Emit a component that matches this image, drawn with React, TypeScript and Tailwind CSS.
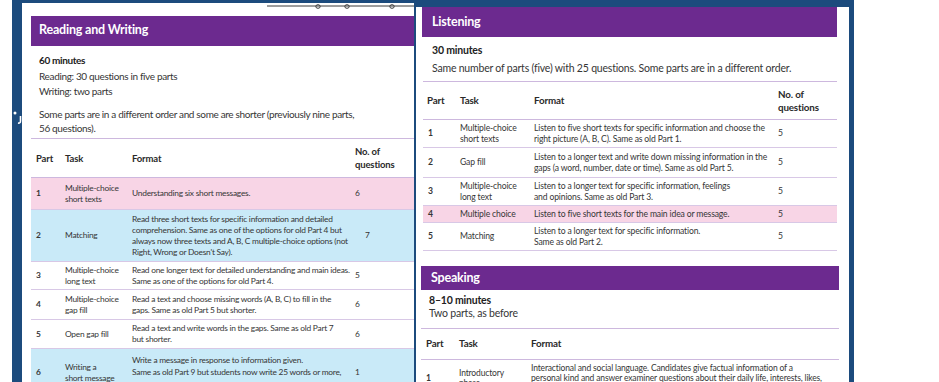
type Row = {
  part: string;
  task: string[];
  format: string[];
  n?: string;
  nPad?: string;
  h: string;
  bg?: string;
};

const leftRows: Row[] = [
  {
    part: "1",
    task: ["Multiple-choice", "short texts"],
    format: ["Understanding six short messages."],
    n: "6",
    h: "h-[32px]",
    bg: "bg-[#f8d5e6]",
  },
  {
    part: "2",
    task: ["Matching"],
    format: [
      "Read three short texts for specific information and detailed",
      "comprehension. Same as one of the options for old Part 4 but",
      "always now three texts and A, B, C multiple-choice options (not",
      "Right, Wrong or Doesn't Say).",
    ],
    n: "7",
    nPad: "pl-[10px]",
    h: "h-[52px]",
    bg: "bg-[#c9eaf8]",
  },
  {
    part: "3",
    task: ["Multiple-choice", "long text"],
    format: [
      "Read one longer text for detailed understanding and main ideas.",
      "Same as one of the options for old Part 4.",
    ],
    n: "5",
    h: "h-[28px]",
  },
  {
    part: "4",
    task: ["Multiple-choice", "gap fill"],
    format: [
      "Read a text and choose missing words (A, B, C) to fill in the",
      "gaps. Same as old Part 5 but shorter.",
    ],
    n: "6",
    h: "h-[30px]",
  },
  {
    part: "5",
    task: ["Open gap fill"],
    format: [
      "Read a text and write words in the gaps. Same as old Part 7",
      "but shorter.",
    ],
    n: "6",
    h: "h-[29px]",
  },
  {
    part: "6",
    task: ["Writing a", "short message"],
    format: [
      "Write a message in response to information given.",
      "Same as old Part 9 but students now write 25 words or more,",
      "rather than writing 25–35 words.",
    ],
    n: "1",
    h: "h-[48px]",
    bg: "bg-[#c9eaf8]",
  },
];

const listeningRows: Row[] = [
  {
    part: "1",
    task: ["Multiple-choice", "short texts"],
    format: [
      "Listen to five short texts for specific information and choose the",
      "right picture (A, B, C). Same as old Part 1.",
    ],
    n: "5",
    h: "h-[28px]",
  },
  {
    part: "2",
    task: ["Gap fill"],
    format: [
      "Listen to a longer text and write down missing information in the",
      "gaps (a word, number, date or time). Same as old Part 5.",
    ],
    n: "5",
    h: "h-[30px]",
  },
  {
    part: "3",
    task: ["Multiple-choice", "long text"],
    format: [
      "Listen to a longer text for specific information, feelings",
      "and opinions. Same as old Part 3.",
    ],
    n: "5",
    h: "h-[28px]",
  },
  {
    part: "4",
    task: ["Multiple choice"],
    format: ["Listen to five short texts for the main idea or message."],
    n: "5",
    h: "h-[17px]",
    bg: "bg-[#f8d5e6]",
  },
  {
    part: "5",
    task: ["Matching"],
    format: ["Listen to a longer text for specific information.", "Same as old Part 2."],
    n: "5",
    h: "h-[28px]",
  },
];

function Lines({ lines }: { lines: string[] }) {
  return (
    <div className="whitespace-nowrap">
      {lines.map((l) => (
        <div key={l}>{l}</div>
      ))}
    </div>
  );
}

function SectionHeader({ title, className }: { title: string; className: string }) {
  return (
    <div className={`flex items-center bg-[#6c2a8f] ${className}`}>
      <span className="text-[12.5px] font-bold tracking-[-0.2px] text-white">{title}</span>
    </div>
  );
}

export default function App() {
  return (
    <div className="relative flex h-[382px] w-[939px] overflow-hidden bg-white font-[Lato,sans-serif] text-[#363636]">
      <div className="w-[12px]" />

      {/* blue backdrop holding both pages */}
      <div className="flex w-[842px] bg-[#1c4b7d] pl-[10px]">
        {/* Left page */}
        <div className="relative mt-[3px] w-[392px] bg-white">
          <svg className="absolute left-[245px] top-0" width="147" height="8" viewBox="0 0 147 8">
            <line x1="0" y1="3" x2="147" y2="3" stroke="#3a3a3a" strokeWidth="1" />
            <ellipse cx="51" cy="3.5" rx="2.2" ry="1.8" fill="none" stroke="#3a3a3a" strokeWidth="1" />
            <ellipse cx="80" cy="3.5" rx="2.2" ry="1.8" fill="none" stroke="#3a3a3a" strokeWidth="1" />
            <ellipse cx="125" cy="3.5" rx="2.2" ry="1.8" fill="none" stroke="#3a3a3a" strokeWidth="1" />
          </svg>

          <SectionHeader title="Reading and Writing" className="ml-[9px] mt-[12.5px] h-[30px] pl-[8px]" />

          <div className="mt-[7.5px] pl-[17px] text-[10px] leading-[15.5px] tracking-[-0.35px]">
            <p className="font-bold text-[#222]">60 minutes</p>
            <p>Reading: 30 questions in five parts</p>
            <p>Writing: two parts</p>
            <p className="mt-[7px] leading-[14.5px]">
              Some parts are in a different order and some are shorter (previously nine parts,
              <br />
              56 questions).
            </p>
          </div>

          <div className="ml-[9px] mt-[2.5px] border-t border-[#cdb8de] text-[8.4px] tracking-[-0.25px]">
            <div className="grid h-[39px] grid-cols-[34px_67px_223px_1fr] items-center border-b border-[#cdb8de] text-[9.5px] font-bold leading-[13px] tracking-[-0.15px] text-[#2a2a2a]">
              <div className="pl-[5px]">Part</div>
              <div>Task</div>
              <div>Format</div>
              <div>
                No. of
                <br />
                questions
              </div>
            </div>
            {leftRows.map((r) => (
              <div
                key={r.part}
                className={`grid grid-cols-[34px_67px_223px_1fr] items-center border-b border-[#d8c8e6] leading-[11px] ${r.h} ${r.bg ?? ""}`}
              >
                <div className="pl-[5px] font-bold">{r.part}</div>
                <Lines lines={r.task} />
                <div className={r.part === "6" ? "leading-[12.5px]" : ""}>
                  <Lines lines={r.format} />
                </div>
                <div className={r.nPad ?? ""}>{r.n}</div>
              </div>
            ))}
          </div>
        </div>

        <div className="w-[2px]" />

        {/* Right page */}
        <div className="mt-[7px] w-[433px] bg-white">
          <SectionHeader title="Listening" className="ml-[6px] h-[30px] w-[415px] pl-[10px]" />

          <div className="mt-[5.5px] pl-[16px] text-[10.5px] leading-[15px] tracking-[-0.2px]">
            <p className="font-bold text-[#222]">30 minutes</p>
            <p className="mt-[3px]">
              Same number of parts (five) with 25 questions. Some parts are in a different order.
            </p>
          </div>

          <div className="ml-[7px] mt-[5.5px] w-[414px] border-t border-[#cdb8de] text-[8.6px] tracking-[-0.15px]">
            <div className="grid h-[38px] grid-cols-[37px_74px_244px_1fr] items-center border-b border-[#cdb8de] text-[9.8px] font-bold leading-[13px] text-[#2a2a2a]">
              <div className="pl-[4px]">Part</div>
              <div>Task</div>
              <div>Format</div>
              <div>
                No. of
                <br />
                questions
              </div>
            </div>
            {listeningRows.map((r) => (
              <div
                key={r.part}
                className={`grid grid-cols-[37px_74px_244px_1fr] items-center border-b border-[#d8c8e6] leading-[11px] ${r.h} ${r.bg ?? ""}`}
              >
                <div className="pl-[5px] font-bold">{r.part}</div>
                <Lines lines={r.task} />
                <Lines lines={r.format} />
                <div>{r.n}</div>
              </div>
            ))}
          </div>

          <SectionHeader title="Speaking" className="ml-[5px] mt-[15px] h-[24px] w-[418px] pl-[10px]" />

          <div className="mt-[3.5px] pl-[13px] text-[10.5px] leading-[13px] tracking-[-0.2px]">
            <p className="font-bold text-[#222]">8–10 minutes</p>
            <p>Two parts, as before</p>
          </div>

          <div className="ml-[5px] mt-[8px] w-[418px] border-t border-[#cdb8de] text-[8.5px] tracking-[-0.15px]">
            <div className="grid h-[31px] grid-cols-[38px_72px_1fr] items-center border-b border-[#cdb8de] text-[9.8px] font-bold text-[#2a2a2a]">
              <div className="pl-[5px]">Part</div>
              <div>Task</div>
              <div>Format</div>
            </div>
            <div className="grid h-[37px] grid-cols-[38px_72px_1fr] items-center leading-[10px]">
              <div className="pl-[5px] font-bold">1</div>
              <Lines lines={["Introductory", "phase"]} />
              <Lines
                lines={[
                  "Interactional and social language. Candidates give factual information of a",
                  "personal kind and answer examiner questions about their daily life, interests, likes,",
                  "etc., followed by a longer 'Tell me something about …' question.",
                ]}
              />
            </div>
          </div>
        </div>
      </div>

      {/* stray white marks on the blue margin */}
      <svg className="absolute left-[12px] top-[108px]" width="11" height="18" viewBox="0 0 11 18">
        <circle cx="3" cy="5" r="1.5" fill="#fff" />
        <path d="M8.5 8 L8.5 13 Q8.5 15.5 6 15" fill="none" stroke="#fff" strokeWidth="1.6" />
      </svg>
    </div>
  );
}
